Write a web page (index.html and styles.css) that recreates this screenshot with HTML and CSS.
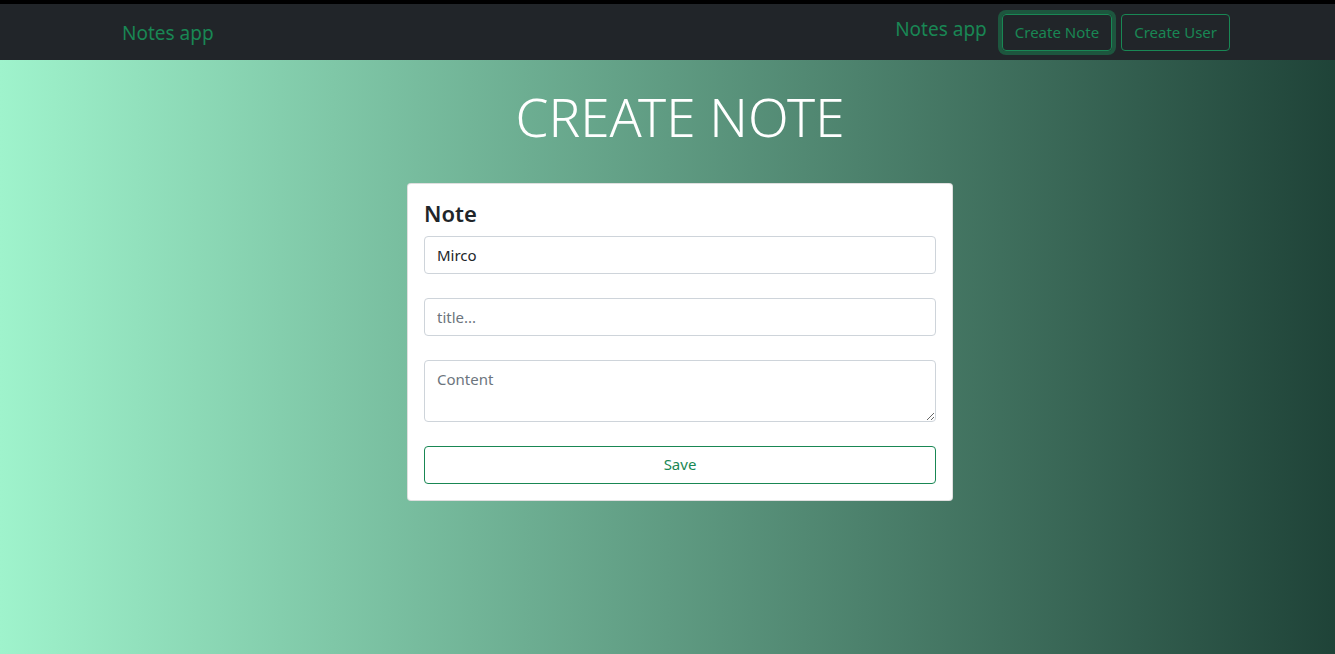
FILE: index.html
```html
<!DOCTYPE html>
<html lang="en">
<head>
<meta charset="utf-8">
<title>Notes app</title>
<link rel="stylesheet" href="styles.css">
</head>
<body>
<div class="topstrip"></div>
<nav class="navbar">
  <a class="brand" href="#">Notes app</a>
  <div class="nav-right">
    <span class="nav-title">Notes app</span>
    <button class="btn btn-outline focused">Create Note</button>
    <button class="btn btn-outline">Create User</button>
  </div>
</nav>
<main class="page">
  <h1 class="display">CREATE NOTE</h1>
  <div class="card">
    <h4 class="card-title">Note</h4>
    <form class="note-form">
      <input class="form-control" type="text" value="Mirco">
      <input class="form-control" type="text" placeholder="title...">
      <textarea class="form-control textarea" rows="2" placeholder="Content"></textarea>
      <button type="button" class="btn btn-outline btn-block">Save</button>
    </form>
  </div>
</main>
</body>
</html>
```

FILE: styles.css
```css
* { box-sizing: border-box; }
html, body { margin: 0; padding: 0; }
body {
  font-family: "Noto Sans", "Open Sans", sans-serif;
  min-height: 100vh;
  background: linear-gradient(to right, #9ff3cc, #1f4338);
  color: #212529;
}
.topstrip { height: 4px; background: #000; }
.navbar {
  height: 56px;
  background: #212529;
  display: flex;
  align-items: center;
  justify-content: space-between;
  padding: 0 105px 0 122px;
}
.brand {
  color: #198754;
  font-size: 19px;
  text-decoration: none;
  line-height: 30px;
  padding-top: 2px;
}
.nav-right { display: flex; align-items: center; }
.nav-title {
  color: #198754;
  font-size: 19px;
  margin-right: 15px;
  margin-bottom: 7px;
}
.btn {
  font-family: inherit;
  font-size: 15px;
  line-height: 23px;
  padding: 6px 12px;
  border-radius: 4px;
  background: transparent;
  cursor: pointer;
}
.btn-outline { color: #198754; border: 1px solid #198754; }
.nav-right .btn { margin-right: 9px; }
.nav-right .btn:last-child { margin-right: 0; }
.focused { box-shadow: 0 0 0 4px rgba(25,135,84,.5); }
.page {
  display: flex;
  flex-direction: column;
  align-items: center;
  padding-left: 25px;
}
.display {
  margin: 25px 0 34px;
  font-weight: 300;
  font-size: 53px;
  line-height: 1.2;
  color: #fff;
}
.card {
  width: 546px;
  background: #fff;
  border: 1px solid rgba(0,0,0,.125);
  border-radius: 4px;
  padding: 16px;
}
.card-title {
  margin: 0 0 10px;
  font-size: 22px;
  font-weight: 600;
  line-height: 1.2;
}
.note-form { display: flex; flex-direction: column; gap: 24px; }
.form-control {
  display: block;
  width: 100%;
  font-family: inherit;
  font-size: 15px;
  line-height: 24px;
  padding: 6px 12px;
  color: #212529;
  border: 1px solid #ced4da;
  border-radius: 4px;
  background: #fff;
  height: 38px;
}
.form-control::placeholder { color: #6c757d; }
.textarea { height: 62px; resize: vertical; }
.btn-block { width: 100%; height: 38px; }
```
